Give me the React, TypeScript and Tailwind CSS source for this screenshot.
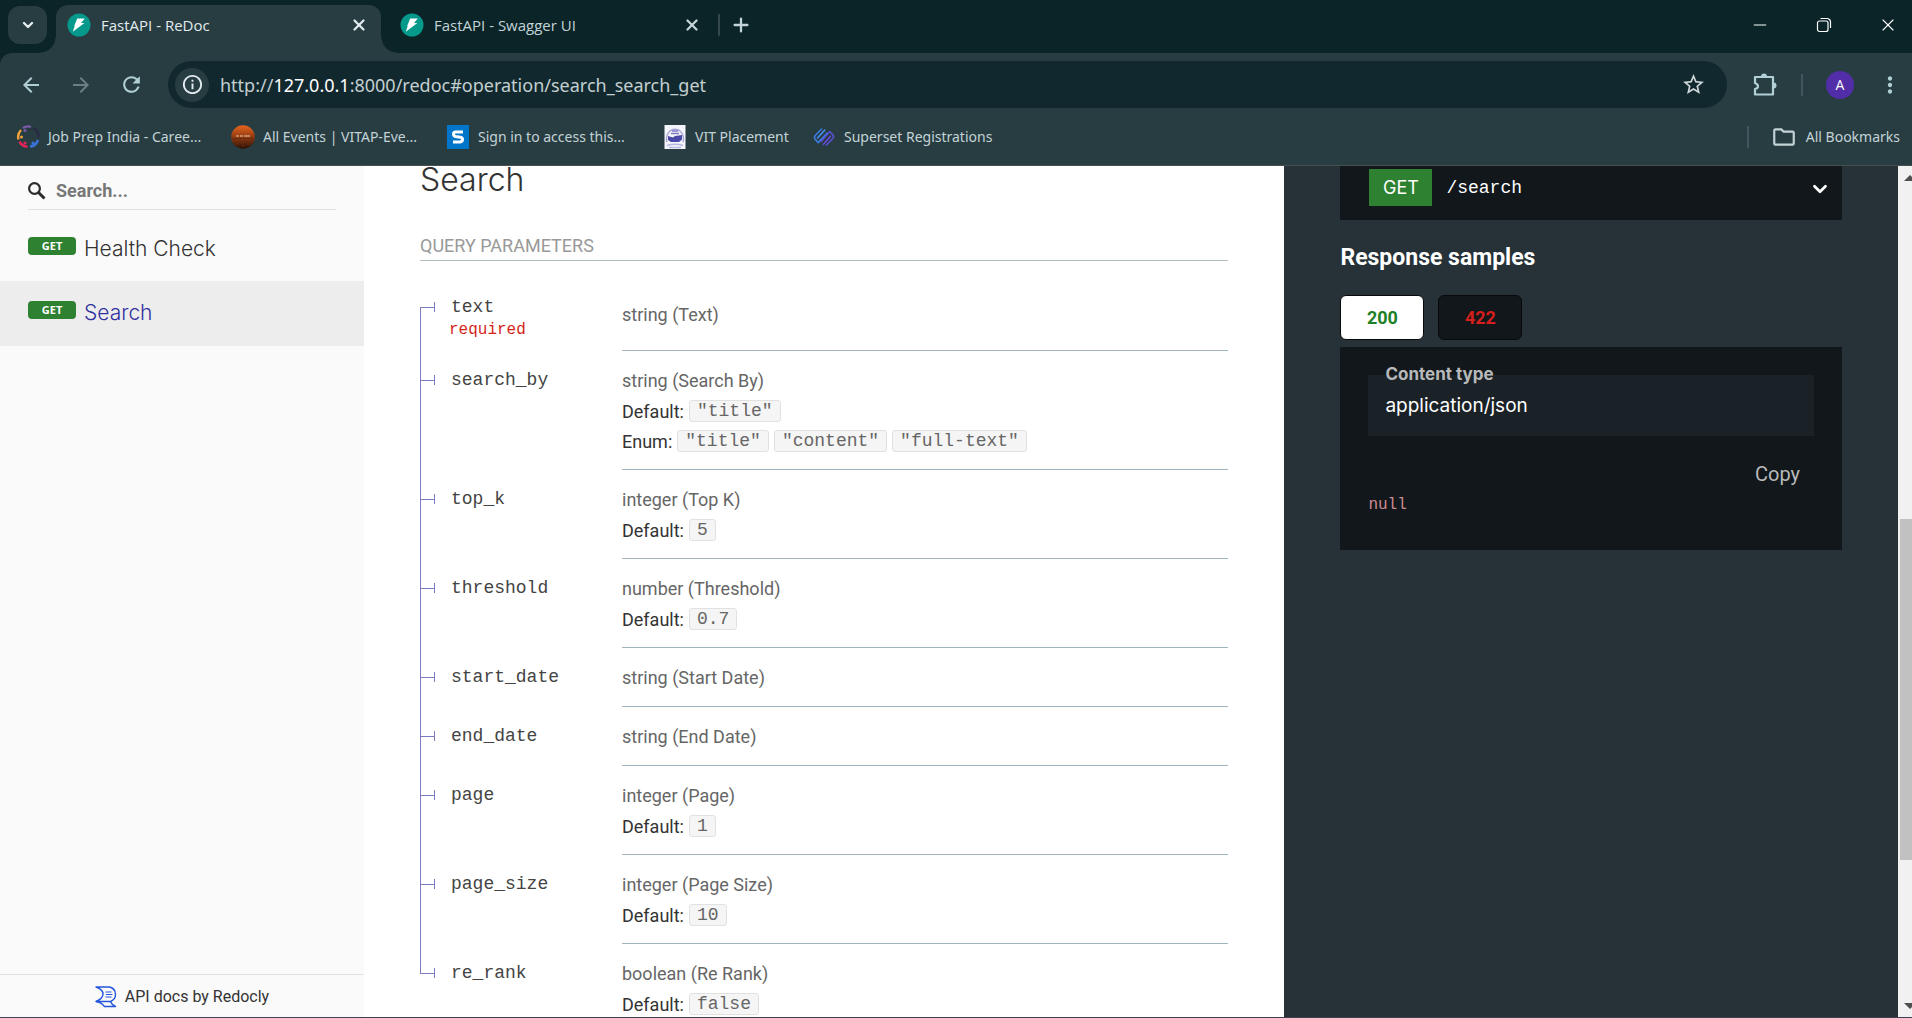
import React from "react";
import { ChevronDown, Minus, Plus, X } from "lucide-react";
import {
  MdArrowBack,
  MdArrowForward,
  MdInfoOutline,
  MdMoreVert,
  MdOutlineFolder,
  MdRefresh,
  MdStarBorder,
} from "react-icons/md";

type Param = {
  name: string;
  type: string;
  required?: boolean;
  def?: string;
  options?: string[];
};

const params: Param[] = [
  { name: "text", type: "string (Text)", required: true },
  {
    name: "search_by",
    type: "string (Search By)",
    def: '"title"',
    options: ['"title"', '"content"', '"full-text"'],
  },
  { name: "top_k", type: "integer (Top K)", def: "5" },
  { name: "threshold", type: "number (Threshold)", def: "0.7" },
  { name: "start_date", type: "string (Start Date)" },
  { name: "end_date", type: "string (End Date)" },
  { name: "page", type: "integer (Page)", def: "1" },
  { name: "page_size", type: "integer (Page Size)", def: "10" },
  { name: "re_rank", type: "boolean (Re Rank)", def: "false" },
];

function FastApiIcon() {
  return (
    <svg viewBox="0 0 24 24" className="size-6 shrink-0" aria-hidden="true">
      <circle cx="12" cy="12" r="11.5" fill="#05998b" />
      <path d="M10.200 5.400h7.600l-3.800 4.700h3.400L5.800 18.800l1.900-5.800H7.200z" fill="#fff" />
    </svg>
  );
}

function CareerIcon() {
  return (
    <svg viewBox="0 0 24 24" className="size-6 shrink-0" fill="none" aria-hidden="true">
      <path d="M15 1.800A9.800 9.800 0 0 0 7 3" stroke="#7b5aa6" strokeWidth="2.400" />
      <path d="M5 5A9.800 9.800 0 0 0 2.500 14.500" stroke="#f2a33a" strokeWidth="2.400" />
      <path d="M3.500 16.500a9.500 9.500 0 0 0 8 5.300" stroke="#e8245c" strokeWidth="2.600" />
      <path d="M14 21.500a9.500 9.500 0 0 0 8-6.500" stroke="#3b72d9" strokeWidth="2.600" />
      <path d="M17 2.800a9.500 9.500 0 0 1 5.500 10" stroke="#2a2b45" strokeWidth="2.400" />
      <circle cx="9" cy="5.500" r="1.500" fill="#7b5aa6" />
      <circle cx="5.500" cy="12" r="1.500" fill="#f2a33a" />
      <circle cx="9" cy="18" r="1.600" fill="#e8245c" />
      <circle cx="17" cy="18" r="1.600" fill="#3b72d9" />
      <circle cx="14" cy="4.500" r="1.300" fill="#2a2b45" />
    </svg>
  );
}

function EventsIcon() {
  return (
    <svg viewBox="0 0 24 24" className="size-6 shrink-0" aria-hidden="true">
      <defs>
        <linearGradient id="events" x1="0" y1="0" x2="0" y2="1">
          <stop offset="0" stopColor="#e8641f" />
          <stop offset="0.450" stopColor="#9a3f12" />
          <stop offset="1" stopColor="#2a1208" />
        </linearGradient>
      </defs>
      <circle cx="12" cy="12" r="11.800" fill="url(#events)" />
      <path d="M5 11h3m1 0h3m1 0h6" stroke="#f0c9a8" strokeWidth="1.200" />
      <path d="M1 13.500h22M8 16l-2 4M16 16l2 4M12 16v6" stroke="#6b2a0e" strokeWidth="1" />
    </svg>
  );
}

function SignInIcon() {
  return (
    <svg viewBox="0 0 24 24" className="size-6 shrink-0" aria-hidden="true">
      <rect x="1" width="22" height="24" fill="#0075c9" />
      <path
        d="M17 7H9.500Q7.500 7 7.500 9t2 2.500l5 .8q2 .4 2 2.300t-2 2.400H7"
        fill="none"
        stroke="#fff"
        strokeWidth="3"
      />
    </svg>
  );
}

function PlacementIcon() {
  return (
    <svg viewBox="0 0 24 24" className="size-6 shrink-0" aria-hidden="true">
      <rect x="1.500" width="21" height="24" fill="#f4f4fb" />
      <path d="M4 17a8.500 9.500 0 1 1 16 0" fill="none" stroke="#a9a8d8" strokeWidth="1.500" />
      <path d="M5 11l5 1.500 2-1.500 7-1v4.500l-3 2.500H8l-3-2z" fill="#4a49a8" />
      <path d="M9 6h6M8 8.500h8" stroke="#7d7cc4" strokeWidth="1.300" />
      <path d="M4 20.500q8-2.500 16 0M6 22.500h12" fill="none" stroke="#b7b6de" strokeWidth="1.500" />
    </svg>
  );
}

function SupersetIcon() {
  return (
    <svg
      viewBox="0 0 24 24"
      className="size-6 shrink-0"
      fill="none"
      strokeWidth="1.600"
      strokeLinecap="round"
      strokeLinejoin="round"
      aria-hidden="true"
    >
      <path d="M9.500 4 3.200 10.500q-1.500 2 0 3.800l3 3.300 9-9.600" stroke="#3d7be0" />
      <path d="M12.800 5 5.500 13" stroke="#4a8df0" />
      <path d="m14.500 20 6.300-6.500q1.500-2 0-3.800l-3-3.200L9 16.500" stroke="#5a50d8" />
      <path d="m11.500 19.300 7-8" stroke="#6a48d8" />
    </svg>
  );
}

function PuzzleIcon() {
  return (
    <svg viewBox="0 0 26 26" className="size-[26px]" aria-hidden="true">
      <path
        d="M4 5h18v17.500H4v-5.500q3-.5 3-2.700T4 11z"
        fill="none"
        stroke="#b0d0d6"
        strokeWidth="2.200"
        strokeLinejoin="round"
      />
      <path d="M10 4.500a3 3 0 0 1 6 0zM22.500 10.500a3 3 0 0 1 0 6z" fill="#b0d0d6" />
    </svg>
  );
}

function RedoclyIcon() {
  return (
    <svg
      viewBox="0 0 22 22"
      className="size-[22px] shrink-0"
      fill="none"
      stroke="#2456dc"
      strokeWidth="1.400"
      strokeLinejoin="round"
      aria-hidden="true"
    >
      <path d="M1 1h13.500q6 1.500 6 7.500 0 5-5 7H1q7-3 7-7.500T1 1z" />
      <path d="M1 15.500q5 .5 8.500 5h11q-4-2-5-5" />
      <path d="M10.500 6h6M11 8.500h6.500M10.500 11h6" strokeWidth="1.200" />
    </svg>
  );
}

const bookmarks = [
  { label: "Job Prep India - Caree...", icon: <CareerIcon />, width: "w-[215px]" },
  { label: "All Events | VITAP-Eve...", icon: <EventsIcon />, width: "w-[215px]" },
  { label: "Sign in to access this...", icon: <SignInIcon />, width: "w-[217px]" },
  { label: "VIT Placement", icon: <PlacementIcon />, width: "w-[149px]" },
  { label: "Superset Registrations", icon: <SupersetIcon />, width: "w-[200px]" },
];

function BrowserChrome() {
  return (
    <header className="shrink-0 bg-[#0a2428] font-['Open_Sans',sans-serif] text-[#c3d3d6]">
      <div className="flex h-[53px]">
        <button
          aria-label="Search tabs"
          className="mt-[6px] ml-2 flex h-[38px] w-[39px] items-center justify-center rounded-xl bg-[#283d42] text-[#e6eef0]"
        >
          <ChevronDown className="size-4" strokeWidth={3.500} />
        </button>
        <div className="ml-[9px] flex w-[325px] flex-col pt-[5px]">
          <div className="relative flex grow items-center rounded-t-xl bg-[#283d42] pr-3 pb-2 pl-[11px] text-[15px] text-[#e1ebed]">
            <FastApiIcon />
            <span className="ml-[10px] grow">FastAPI - ReDoc</span>
            <button aria-label="Close FastAPI - ReDoc tab" className="px-px">
              <X className="size-[18px]" strokeWidth={3} />
            </button>
            <span className="absolute bottom-0 -left-4 size-4 bg-[radial-gradient(circle_at_0_0,transparent_15px,#283d42_16px)]" />
            <span className="absolute -right-4 bottom-0 size-4 bg-[radial-gradient(circle_at_100%_0,transparent_15px,#283d42_16px)]" />
          </div>
        </div>
        <div className="flex w-[336px] items-center pr-4 pb-[3px] pl-[19px] text-[15px]">
          <FastApiIcon />
          <span className="ml-[10px] grow">FastAPI - Swagger UI</span>
          <button aria-label="Close FastAPI - Swagger UI tab">
            <X className="size-[18px]" strokeWidth={3} />
          </button>
        </div>
        <span className="mt-[14px] ml-px h-[22px] w-[2px] rounded bg-[#34494e]" />
        <button aria-label="New tab" className="ml-[10px] pb-[3px]">
          <Plus className="size-[22px]" strokeWidth={2.500} />
        </button>
        <div className="ml-auto flex items-center gap-11 pr-[14px] pb-[3px] text-white">
          <button aria-label="Minimize">
            <Minus className="size-5" strokeWidth={1.200} />
          </button>
          <button aria-label="Restore" className="px-[2px]">
            <svg viewBox="0 0 16 16" className="size-4" fill="none" stroke="currentColor" strokeWidth="1.200">
              <rect x="1.500" y="4" width="10.500" height="10.500" rx="2" />
              <path d="M4.500 1.500h6.500a3.500 3.500 0 0 1 3.500 3.500v6" />
            </svg>
          </button>
          <button aria-label="Close">
            <X className="size-5" strokeWidth={1.300} />
          </button>
        </div>
      </div>
      <div className="rounded-tl-xl border-b border-[#47504f] bg-[#283d42] pt-2">
        <div className="flex h-[47px] items-center text-[#b0d0d6]">
          <button aria-label="Back" className="ml-[19px]">
            <MdArrowBack className="size-6" />
          </button>
          <button aria-label="Forward" className="ml-[26px] text-[#6b7f84]">
            <MdArrowForward className="size-6" />
          </button>
          <button aria-label="Reload" className="ml-[26px]">
            <MdRefresh className="size-[25px]" />
          </button>
          <div className="ml-6 flex h-full grow items-center rounded-full bg-[#11292e] pr-[21px] pl-[7px]">
            <button
              aria-label="Site information"
              className="flex size-[34px] shrink-0 items-center justify-center rounded-full bg-[#283d42] text-[#e1ebed]"
            >
              <MdInfoOutline className="size-[23px]" />
            </button>
            <div
              role="textbox"
              aria-label="Address"
              className="grow pt-px pl-[11px] font-['Noto_Sans',sans-serif] text-[18px] text-[#c3cfd1]"
            >
              http://<span className="text-white">127.0.0.1</span>:8000/redoc#operation/search_search_get
            </div>
            <button aria-label="Bookmark this page" className="text-[#d0d8d9]">
              <MdStarBorder className="size-[25px]" />
            </button>
          </div>
          <button aria-label="Extensions" className="ml-6">
            <PuzzleIcon />
          </button>
          <span className="ml-[24px] h-[22px] w-[2px] bg-[#40585d]" />
          <button
            aria-label="Profile"
            className="ml-[23px] flex size-7 items-center justify-center rounded-full bg-[#512da8] text-[14px] text-white"
          >
            A
          </button>
          <button aria-label="Menu" className="mr-[9px] ml-[23px]">
            <MdMoreVert className="size-[26px]" />
          </button>
        </div>
        <nav aria-label="Bookmarks" className="flex h-[57px] items-center pl-4 font-['Noto_Sans',sans-serif] text-[14px]">
          {bookmarks.map((b) => (
            <a key={b.label} href="#" className={`flex shrink-0 items-center gap-2 whitespace-nowrap ${b.width}`}>
              {b.icon}
              {b.label}
            </a>
          ))}
          <span className="ml-auto h-[22px] w-[2px] bg-[#40585d]" />
          <button className="mr-3 ml-[22px] flex items-center gap-[9px]">
            <MdOutlineFolder className="size-[26px]" />
            All Bookmarks
          </button>
        </nav>
      </div>
    </header>
  );
}

function Sidebar() {
  return (
    <aside className="flex w-[364px] shrink-0 flex-col bg-[#fafafa]">
      <label className="mx-7 flex h-11 items-center border-b border-[#e1e1e1] pt-[6px]">
        <svg viewBox="0 0 18 18" className="size-[18px] shrink-0" fill="none" stroke="#2b2b2b" aria-hidden="true">
          <circle cx="6.500" cy="6.500" r="5.400" strokeWidth="2.200" />
          <path d="m10.500 10.500 6 6" strokeWidth="3" />
        </svg>
        <input
          type="text"
          aria-label="Search"
          placeholder="Search..."
          className="ml-[10px] w-full bg-transparent font-['Roboto',sans-serif] text-[18px] font-bold outline-none placeholder:text-[#777]"
        />
      </label>
      <nav aria-label="Operations" className="mt-[7px] font-['Inter',sans-serif] text-[21px] font-light">
        <MenuItem label="Health Check" />
        <MenuItem label="Search" active />
      </nav>
      <a
        href="#"
        className="mt-auto flex h-[43px] items-center justify-center gap-2 border-t border-[#e1e1e1] pt-px font-['Roboto',sans-serif] text-[16px] text-[#333]"
      >
        <RedoclyIcon />
        API docs by Redocly
      </a>
    </aside>
  );
}

function MenuItem({ label, active }: { label: string; active?: boolean }) {
  return (
    <a
      href="#"
      className={
        active
          ? "flex h-[65px] items-start bg-[#ededed] px-7 pt-5 text-[#32329f]"
          : "flex h-16 items-start px-7 pt-5 text-[#333]"
      }
    >
      <span className="mr-2 h-[18px] w-12 rounded bg-[#2f8132] text-center font-['Open_Sans',sans-serif] text-[11px] leading-[18px] font-bold text-white">
        GET
      </span>
      <span className="leading-6">{label}</span>
    </a>
  );
}

function Chip({ children }: { children: React.ReactNode }) {
  return (
    <code className="inline-flex h-[22px] items-center rounded-[3px] border border-[#e1e1e2] bg-[#f5f5f5] px-[7px] pt-px font-['Liberation_Mono',monospace] text-[18px] text-[#666]">
      {children}
    </code>
  );
}

function ParamRow({ param, first, last }: { param: Param; first: boolean; last: boolean }) {
  return (
    <tr>
      <td className="relative w-[202px] p-0 align-top">
        <span
          className={
            last
              ? "absolute top-0 left-0 h-[30px] w-px bg-[#7c7cbe]"
              : first
                ? "absolute top-[30px] bottom-0 left-0 w-px bg-[#7c7cbe]"
                : "absolute top-0 bottom-0 left-0 w-px bg-[#7c7cbe]"
          }
        />
        <div className="flex h-[30px] items-center pt-[28px] font-['Liberation_Mono',monospace] text-[18px] text-[#444]">
          <span className="flex h-[10px] w-[15px] items-center border-r border-[#7c7cbe]">
            <span className="h-px w-full bg-[#7c7cbe]" />
          </span>
          <span className="ml-4 leading-[26px]">{param.name}</span>
        </div>
        {param.required && (
          <div className="pt-[13px] pl-[29px] font-['Liberation_Mono',monospace] text-[16px] leading-[18px] text-[#d41f1c]">
            required
          </div>
        )}
      </td>
      <td
        className={
          last
            ? "pt-[15px] pb-[13px] font-['Roboto',sans-serif] text-[18px] text-[#333]"
            : "border-b border-[#9fb4be] pt-[15px] pb-[13px] font-['Roboto',sans-serif] text-[18px] text-[#333]"
        }
      >
        <div className={first ? "py-2 leading-[28px] text-[#666]" : "leading-[30px] text-[#666]"}>{param.type}</div>
        {param.def && (
          <div className="flex h-[30px] items-center gap-[5px]">
            Default: <Chip>{param.def}</Chip>
          </div>
        )}
        {param.options && (
          <div className="flex h-[30px] items-center gap-[5px]">
            Enum:
            {param.options.map((o) => (
              <Chip key={o}>{o}</Chip>
            ))}
          </div>
        )}
      </td>
    </tr>
  );
}

function Samples() {
  return (
    <section className="w-2/5 bg-[#263238] px-14 font-['Roboto',sans-serif] text-white">
      <button className="flex h-[54px] w-full items-start bg-[#11171a] pt-[3px] pr-[11px] pl-[29px] text-left">
        <span className="flex h-[37px] w-[63px] items-center justify-center bg-[#2f8132] font-['Inter',sans-serif] text-[18px]">
          GET
        </span>
        <span className="ml-[14px] grow font-['Liberation_Mono',monospace] text-[18px] leading-[38px]">/search</span>
        <ChevronDown className="mt-[9px] size-[22px]" strokeWidth={3} />
      </button>
      <h3 className="mt-6 text-[23px] leading-7 font-bold">Response samples</h3>
      <div role="tablist" className="mt-[23px] flex gap-[14px] text-[18px] font-bold">
        <button
          role="tab"
          aria-selected="true"
          className="h-[45px] w-[84px] rounded-md border border-[#07090b] bg-white text-[#1d8127]"
        >
          200
        </button>
        <button
          role="tab"
          aria-selected="false"
          className="h-[45px] w-[84px] rounded-md border border-[#07090b] bg-[#11171a] text-[#d41f1c]"
        >
          422
        </button>
      </div>
      <div className="mt-[7px] bg-[#11171a] px-7 pt-7 pb-8">
        <div className="relative h-[61px] bg-[#1a2227] px-[17px] pt-[18px] font-['Inter',sans-serif]">
          <span className="absolute -top-[13px] left-[17px] text-[17px] leading-6 font-bold text-[#b8b9ba]">
            Content type
          </span>
          <span className="text-[19px] leading-[26px]">application/json</span>
        </div>
        <div className="mt-6 flex justify-end pr-[14px]">
          <button className="text-[20px] leading-7 text-[#b8b9ba]">Copy</button>
        </div>
        <pre className="mt-1 pt-px font-['Liberation_Mono',monospace] text-[16px] leading-[25px] text-[#cf8b92]">null</pre>
      </div>
    </section>
  );
}

export default function App() {
  return (
    <div className="flex h-screen flex-col overflow-hidden border-b border-[#3f4152] bg-white">
      <BrowserChrome />
      <div className="flex min-h-0 grow">
        <Sidebar />
        <main className="flex min-w-0 grow overflow-hidden">
          <section className="w-3/5 px-14">
            <h2 className="font-['Inter',sans-serif] text-[32px] leading-7 font-light text-[#333]">Search</h2>
            <h5 className="mt-10 border-b border-[#b3bcc1] pb-[2px] font-['Roboto',sans-serif] text-[18px] leading-6 text-[#999]">
              QUERY PARAMETERS
            </h5>
            <table className="mt-[17px] w-full border-separate border-spacing-0">
              <tbody>
                {params.map((p, i) => (
                  <ParamRow key={p.name} param={p} first={i === 0} last={i === params.length - 1} />
                ))}
              </tbody>
            </table>
          </section>
          <Samples />
        </main>
        <div className="flex w-[14px] shrink-0 flex-col overflow-hidden bg-[#f1f1f1] pt-[9px] pb-2">
          <svg viewBox="0 0 12 6" className="ml-[6px] h-[6px] w-3 shrink-0" aria-hidden="true">
            <path d="M6 0l6 6H0z" fill="#505050" />
          </svg>
          <div className="mt-[338px] ml-[2px] h-[341px] bg-[#c1c1c1]" />
          <svg viewBox="0 0 12 6" className="mt-auto ml-[6px] h-[6px] w-3 shrink-0" aria-hidden="true">
            <path d="M0 0h12L6 6z" fill="#505050" />
          </svg>
        </div>
      </div>
    </div>
  );
}
